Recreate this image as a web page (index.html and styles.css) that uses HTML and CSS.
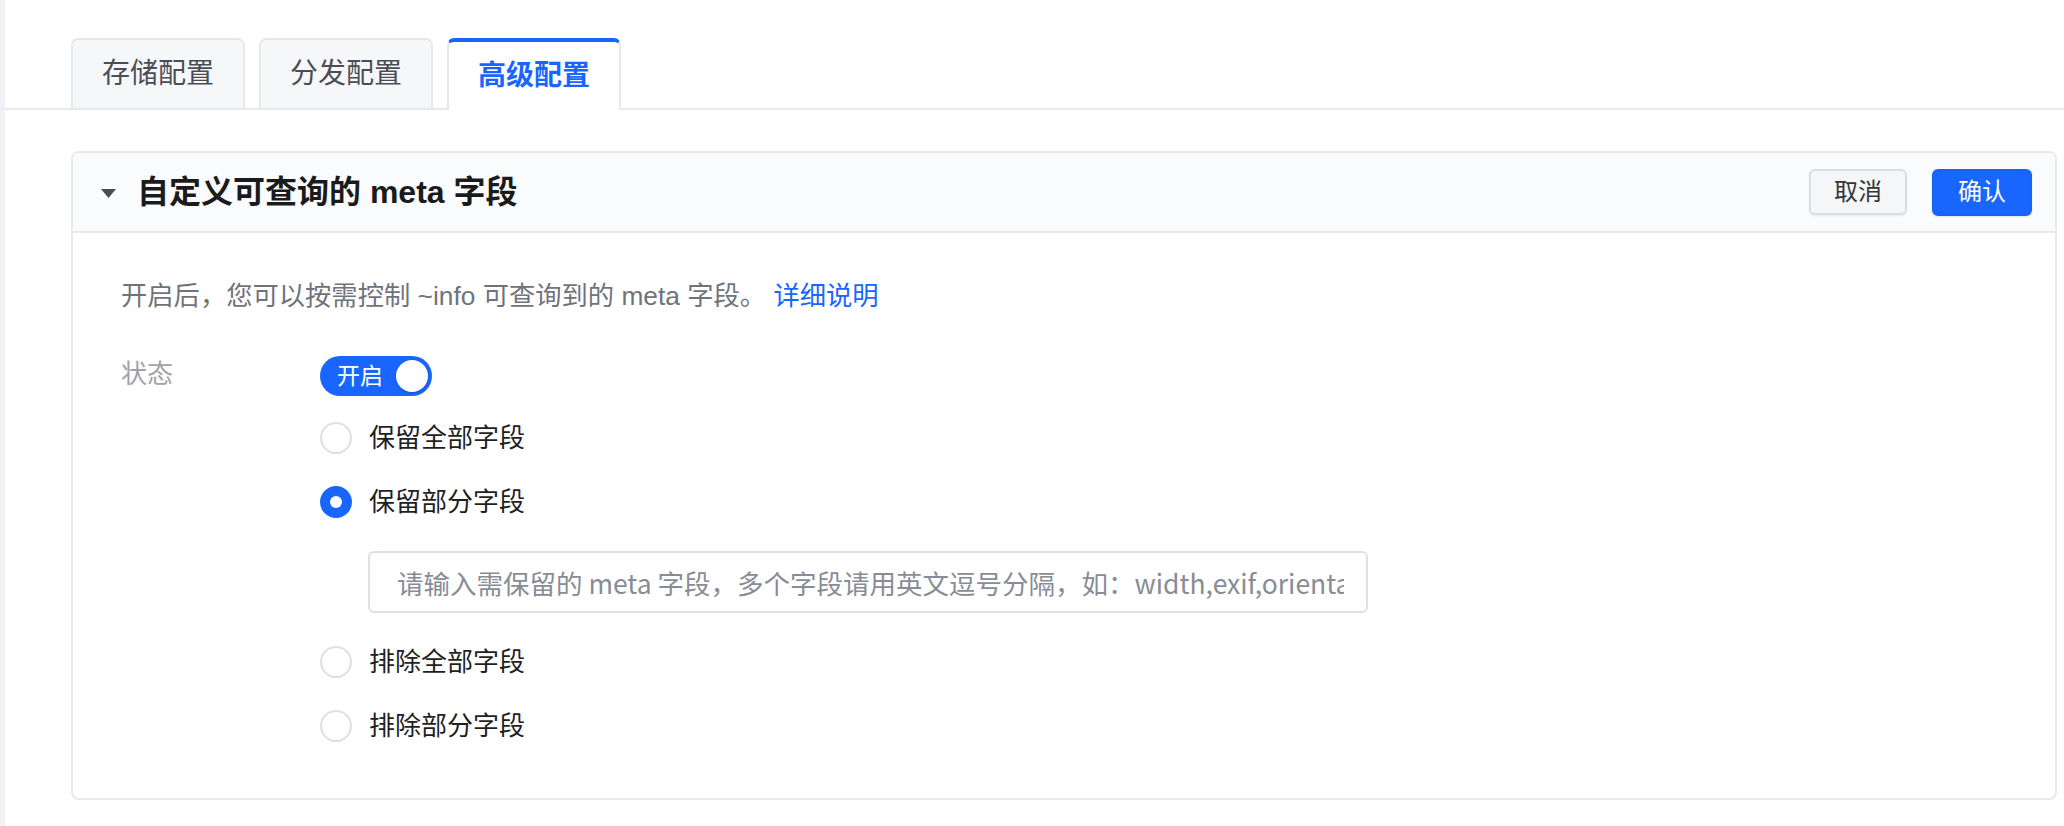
FILE: index.html
```html
<!DOCTYPE html>
<html lang="zh-CN">
<head>
<meta charset="utf-8">
<title>高级配置</title>
<link rel="stylesheet" href="styles.css">
</head>
<body>
<div class="page">
  <div class="edge"></div>
  <main class="main">
    <nav class="tabs">
      <div class="tab">存储配置</div>
      <div class="tab">分发配置</div>
      <div class="tab tab-active">高级配置</div>
    </nav>

    <section class="card">
      <header class="card-head">
        <svg class="caret" width="15" height="9" viewBox="0 0 15 9"><path d="M0 0 H15 L7.5 9 Z" fill="#4a4d55"/></svg>
        <h2 class="card-title">自定义可查询的 meta 字段</h2>
        <div class="head-actions">
          <button class="btn btn-cancel">取消</button>
          <button class="btn btn-primary">确认</button>
        </div>
      </header>

      <div class="card-body">
        <p class="desc">开启后，您可以按需控制 ~info 可查询到的 meta 字段。 <a class="link">详细说明</a></p>

        <div class="form-row">
          <div class="form-label">状态</div>
          <div class="form-control">
            <div class="switch"><span class="switch-text">开启</span><span class="knob"></span></div>
            <div class="radios">
              <label class="radio"><span class="dot"></span><span class="radio-text">保留全部字段</span></label>
              <label class="radio"><span class="dot dot-on"></span><span class="radio-text">保留部分字段</span></label>
              <input class="field" type="text" placeholder="请输入需保留的 meta 字段，多个字段请用英文逗号分隔，如：width,exif,orientation">
              <label class="radio"><span class="dot"></span><span class="radio-text">排除全部字段</span></label>
              <label class="radio"><span class="dot"></span><span class="radio-text">排除部分字段</span></label>
            </div>
          </div>
        </div>
      </div>
    </section>
  </main>
</div>
</body>
</html>
```

FILE: styles.css
```css
* { box-sizing: border-box; }

html, body {
  margin: 0;
  padding: 0;
  background: #ffffff;
}

body {
  font-family: "Liberation Sans", "Noto Sans CJK SC", sans-serif;
  color: #1f1f1f;
}

.page {
  display: flex;
  min-height: 826px;
}

.edge {
  width: 5px;
  flex: none;
  background: #f0f1f6;
}

.main {
  flex: 1;
  padding-top: 38px;
}

/* Tabs */
.tabs {
  display: flex;
  align-items: flex-end;
  gap: 14px;
  padding-left: 66px;
  border-bottom: 2px solid #e8e9ef;
}

.tab {
  width: 174px;
  height: 70px;
  border: 2px solid #e6e8ed;
  border-bottom: none;
  border-radius: 7px 7px 0 0;
  background: #f6f7f9;
  display: flex;
  align-items: center;
  justify-content: center;
  font-size: 28px;
  line-height: 1;
  color: #4a4d55;
}

.tab-active {
  height: 72px;
  margin-bottom: -2px;
  background: #ffffff;
  border-top: 4px solid #1966ff;
  color: #1966ff;
  font-weight: 600;
}

/* Card */
.card {
  margin: 41px 7px 0 66px;
  border: 2px solid #e7e9ee;
  border-radius: 8px;
  overflow: hidden;
}

.card-head {
  height: 80px;
  display: flex;
  align-items: center;
  padding: 0 23px 0 28px;
  background: #fafbfc;
  border-bottom: 2px solid #e8e9ee;
}

.caret {
  flex: none;
  margin-right: 21px;
  margin-top: 2px;
}

.card-title {
  margin: 0;
  font-size: 32px;
  font-weight: 600;
  line-height: 40px;
  color: #1b1b1b;
}

.head-actions {
  margin-left: auto;
  display: flex;
  align-items: center;
  gap: 25px;
}

.btn {
  height: 46px;
  border-radius: 6px;
  font-family: "Liberation Sans", "Noto Sans CJK SC", sans-serif;
  font-size: 24px;
  line-height: 1;
  cursor: pointer;
}

.btn-cancel {
  padding: 0 23px;
  background: #f5f6f8;
  border: 2px solid #dadde3;
  color: #333639;
  box-shadow: 0 1px 2px rgba(0, 0, 0, 0.08);
}

.btn-primary {
  padding: 0 24px;
  height: 47px;
  background: #1966ff;
  border: 2px solid #1a62f0;
  color: #ffffff;
  box-shadow: 0 1px 2px rgba(0, 0, 0, 0.1);
}

.card-body {
  padding: 45px 49px 52px 48px;
}

.desc {
  margin: 0;
  font-size: 26.3px;
  line-height: 36px;
  color: #6f737b;
}

.link {
  color: #1966ff;
  text-decoration: none;
}

.form-row {
  display: flex;
  margin-top: 42px;
}

.form-label {
  width: 199px;
  flex: none;
  font-size: 26px;
  line-height: 36px;
  color: #a0a3a9;
}

.form-control {
  display: flex;
  flex-direction: column;
  align-items: flex-start;
}

.switch {
  width: 112px;
  height: 40px;
  border-radius: 20px;
  background: #1966ff;
  display: flex;
  align-items: center;
  padding: 0 4px 0 17px;
}

.switch-text {
  font-size: 23px;
  line-height: 1;
  color: #ffffff;
}

.knob {
  margin-left: auto;
  width: 32px;
  height: 32px;
  border-radius: 50%;
  background: #ffffff;
  box-shadow: 0 1px 3px rgba(0, 0, 0, 0.2);
}

.radios {
  margin-top: 22px;
  display: flex;
  flex-direction: column;
  align-items: flex-start;
  gap: 24px;
}

.radio {
  height: 40px;
  display: flex;
  align-items: center;
  gap: 17px;
}

.dot {
  width: 32px;
  height: 32px;
  border-radius: 50%;
  border: 2px solid #dcdfe6;
  background: #ffffff;
  display: flex;
  align-items: center;
  justify-content: center;
}

.dot-on {
  border-color: #1966ff;
  background: #1966ff;
}

.dot-on::after {
  content: "";
  width: 12px;
  height: 12px;
  border-radius: 50%;
  background: #ffffff;
}

.radio-text {
  font-size: 26px;
  line-height: 36px;
  color: #1f1f1f;
}

.field {
  margin: 5px 0 5px 48px;
  width: 1000px;
  height: 62px;
  border: 2px solid #dde1ea;
  border-radius: 6px;
  padding: 0 22px 0 27px;
  font-family: "Noto Sans CJK SC", sans-serif;
  font-size: 26.5px;
  color: #333;
  background: #fff;
  outline: none;
}

.field::placeholder {
  color: #878c96;
}
```
